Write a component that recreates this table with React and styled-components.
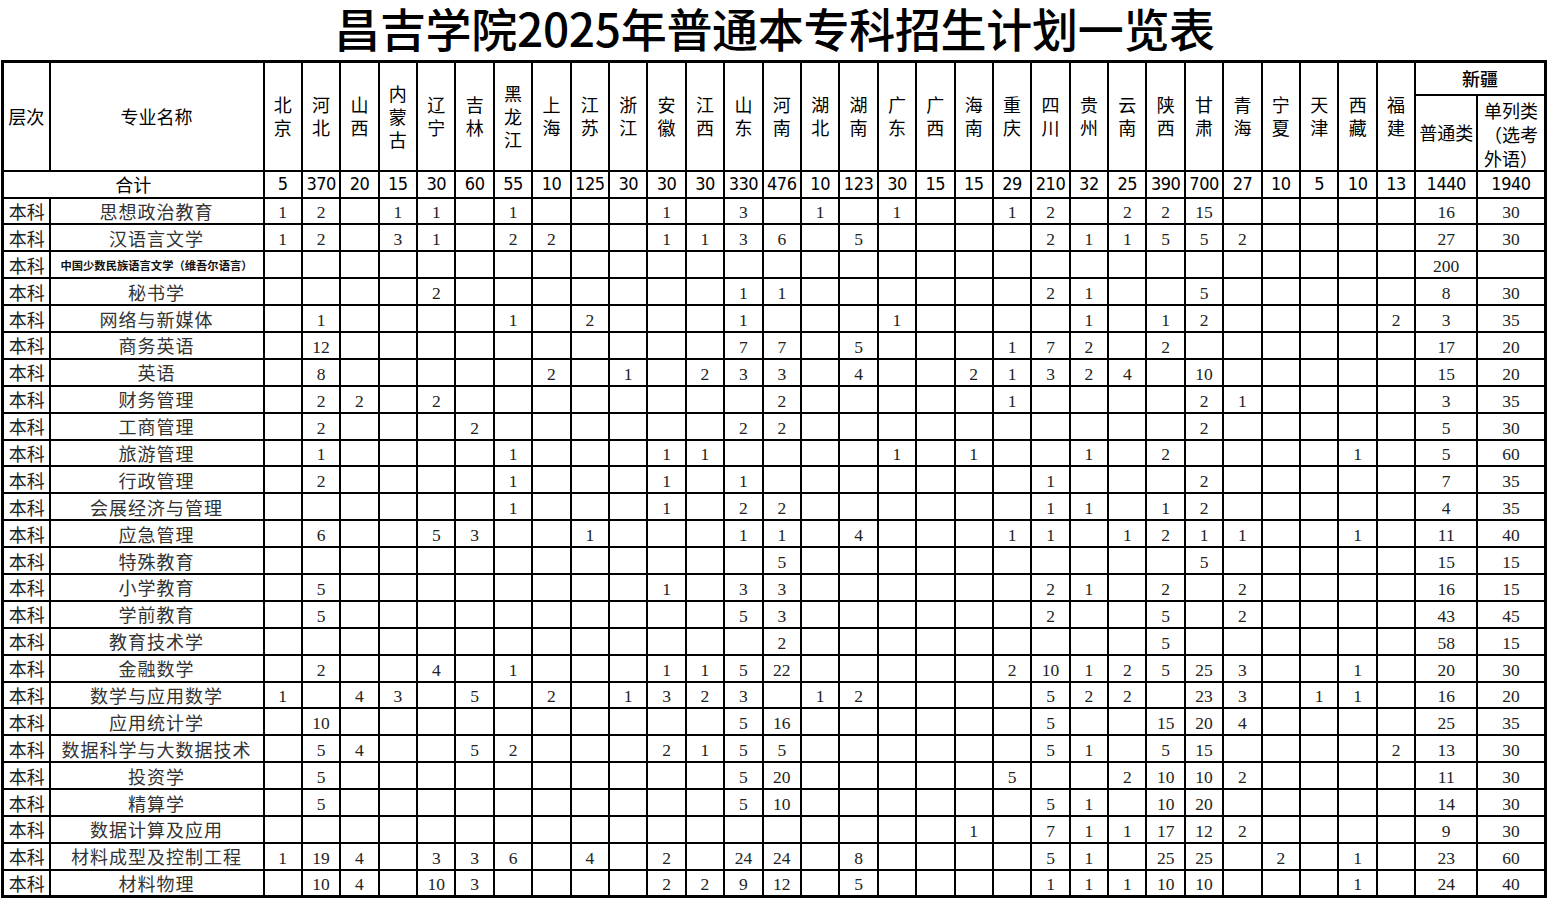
import React from 'react';
import styled, { createGlobalStyle } from 'styled-components';

const GlobalStyle = createGlobalStyle`
    html, body {
        margin: 0;
        padding: 0;
        background: #fff;
    }
    body {
        font-family: "Noto Sans CJK SC", "Noto Sans", sans-serif;
        color: #000;
    }
`;

const provinces = [
    '北京', '河北', '山西', '内蒙古', '辽宁', '吉林', '黑龙江', '上海', '江苏', '浙江',
    '安徽', '江西', '山东', '河南', '湖北', '湖南', '广东', '广西', '海南', '重庆',
    '四川', '贵州', '云南', '陕西', '甘肃', '青海', '宁夏', '天津', '西藏', '福建',
];

const totals = [
    5, 370, 20, 15, 30, 60, 55, 10, 125, 30, 30, 30, 330, 476, 10, 123, 30, 15, 15, 29,
    210, 32, 25, 390, 700, 27, 10, 5, 10, 13,
];

const r = (name, data, general, special, small) => ({ name, data, general, special, small });

const majors = [
    r('思想政治教育', { 北京: 1, 河北: 2, 内蒙古: 1, 辽宁: 1, 黑龙江: 1, 安徽: 1, 山东: 3, 湖北: 1, 广东: 1, 重庆: 1, 四川: 2, 云南: 2, 陕西: 2, 甘肃: 15 }, 16, 30),
    r('汉语言文学', { 北京: 1, 河北: 2, 内蒙古: 3, 辽宁: 1, 黑龙江: 2, 上海: 2, 安徽: 1, 江西: 1, 山东: 3, 河南: 6, 湖南: 5, 四川: 2, 贵州: 1, 云南: 1, 陕西: 5, 甘肃: 5, 青海: 2 }, 27, 30),
    r('中国少数民族语言文学（维吾尔语言）', {}, 200, '', true),
    r('秘书学', { 辽宁: 2, 山东: 1, 河南: 1, 四川: 2, 贵州: 1, 甘肃: 5 }, 8, 30),
    r('网络与新媒体', { 河北: 1, 黑龙江: 1, 江苏: 2, 山东: 1, 广东: 1, 贵州: 1, 陕西: 1, 甘肃: 2, 福建: 2 }, 3, 35),
    r('商务英语', { 河北: 12, 山东: 7, 河南: 7, 湖南: 5, 重庆: 1, 四川: 7, 贵州: 2, 陕西: 2 }, 17, 20),
    r('英语', { 河北: 8, 上海: 2, 浙江: 1, 江西: 2, 山东: 3, 河南: 3, 湖南: 4, 海南: 2, 重庆: 1, 四川: 3, 贵州: 2, 云南: 4, 甘肃: 10 }, 15, 20),
    r('财务管理', { 河北: 2, 山西: 2, 辽宁: 2, 河南: 2, 重庆: 1, 甘肃: 2, 青海: 1 }, 3, 35),
    r('工商管理', { 河北: 2, 吉林: 2, 山东: 2, 河南: 2, 甘肃: 2 }, 5, 30),
    r('旅游管理', { 河北: 1, 黑龙江: 1, 安徽: 1, 江西: 1, 广东: 1, 海南: 1, 贵州: 1, 陕西: 2, 西藏: 1 }, 5, 60),
    r('行政管理', { 河北: 2, 黑龙江: 1, 安徽: 1, 山东: 1, 四川: 1, 甘肃: 2 }, 7, 35),
    r('会展经济与管理', { 黑龙江: 1, 安徽: 1, 山东: 2, 河南: 2, 四川: 1, 贵州: 1, 陕西: 1, 甘肃: 2 }, 4, 35),
    r('应急管理', { 河北: 6, 辽宁: 5, 吉林: 3, 江苏: 1, 山东: 1, 河南: 1, 湖南: 4, 重庆: 1, 四川: 1, 云南: 1, 陕西: 2, 甘肃: 1, 青海: 1, 西藏: 1 }, 11, 40),
    r('特殊教育', { 河南: 5, 甘肃: 5 }, 15, 15),
    r('小学教育', { 河北: 5, 安徽: 1, 山东: 3, 河南: 3, 四川: 2, 贵州: 1, 陕西: 2, 青海: 2 }, 16, 15),
    r('学前教育', { 河北: 5, 山东: 5, 河南: 3, 四川: 2, 陕西: 5, 青海: 2 }, 43, 45),
    r('教育技术学', { 河南: 2, 陕西: 5 }, 58, 15),
    r('金融数学', { 河北: 2, 辽宁: 4, 黑龙江: 1, 安徽: 1, 江西: 1, 山东: 5, 河南: 22, 重庆: 2, 四川: 10, 贵州: 1, 云南: 2, 陕西: 5, 甘肃: 25, 青海: 3, 西藏: 1 }, 20, 30),
    r('数学与应用数学', { 北京: 1, 山西: 4, 内蒙古: 3, 吉林: 5, 上海: 2, 浙江: 1, 安徽: 3, 江西: 2, 山东: 3, 湖北: 1, 湖南: 2, 四川: 5, 贵州: 2, 云南: 2, 甘肃: 23, 青海: 3, 天津: 1, 西藏: 1 }, 16, 20),
    r('应用统计学', { 河北: 10, 山东: 5, 河南: 16, 四川: 5, 陕西: 15, 甘肃: 20, 青海: 4 }, 25, 35),
    r('数据科学与大数据技术', { 河北: 5, 山西: 4, 吉林: 5, 黑龙江: 2, 安徽: 2, 江西: 1, 山东: 5, 河南: 5, 四川: 5, 贵州: 1, 陕西: 5, 甘肃: 15, 福建: 2 }, 13, 30),
    r('投资学', { 河北: 5, 山东: 5, 河南: 20, 重庆: 5, 云南: 2, 陕西: 10, 甘肃: 10, 青海: 2 }, 11, 30),
    r('精算学', { 河北: 5, 山东: 5, 河南: 10, 四川: 5, 贵州: 1, 陕西: 10, 甘肃: 20 }, 14, 30),
    r('数据计算及应用', { 海南: 1, 四川: 7, 贵州: 1, 云南: 1, 陕西: 17, 甘肃: 12, 青海: 2 }, 9, 30),
    r('材料成型及控制工程', { 北京: 1, 河北: 19, 山西: 4, 辽宁: 3, 吉林: 3, 黑龙江: 6, 江苏: 4, 安徽: 2, 山东: 24, 河南: 24, 湖南: 8, 四川: 5, 贵州: 1, 陕西: 25, 甘肃: 25, 宁夏: 2, 西藏: 1 }, 23, 60),
    r('材料物理', { 河北: 10, 山西: 4, 辽宁: 10, 吉林: 3, 安徽: 2, 江西: 2, 山东: 9, 河南: 12, 湖南: 5, 四川: 1, 贵州: 1, 云南: 1, 陕西: 10, 甘肃: 10, 西藏: 1 }, 24, 40),
];

const VerticalLabel = ({ text }) => (
    <Stack>
        {text.split('').map((ch, i) => (
            <span key={i}>{ch}</span>
        ))}
    </Stack>
);

const App = () => {
    return (
        <React.Fragment>
            <GlobalStyle />
            <Page>
                <Title>
                    <TitleText>昌吉学院2025年普通本专科招生计划一览表</TitleText>
                </Title>
                <Sheet>
                    <colgroup>
                        <Col $w={47} />
                        <Col $w={214} />
                        {provinces.map((p) => (
                            <Col key={p} $w={38.4} />
                        ))}
                        <Col $w={62} />
                        <Col $w={68} />
                    </colgroup>
                    <thead>
                        <HeadRow $h={33}>
                            <HeadCell rowSpan={2}>层次</HeadCell>
                            <HeadCell rowSpan={2}>专业名称</HeadCell>
                            {provinces.map((p) => (
                                <HeadCell key={p} rowSpan={2}>
                                    <VerticalLabel text={p} />
                                </HeadCell>
                            ))}
                            <HeadCell colSpan={2} $bold>新疆</HeadCell>
                        </HeadRow>
                        <HeadRow $h={75}>
                            <HeadCell>普通类</HeadCell>
                            <HeadCell $wrap>单列类（选考外语）</HeadCell>
                        </HeadRow>
                    </thead>
                    <tbody>
                        <TotalRow>
                            <TotalLabel colSpan={2}>合计</TotalLabel>
                            {totals.map((n, i) => (
                                <TotalCell key={i}>{n}</TotalCell>
                            ))}
                            <TotalCell>1440</TotalCell>
                            <TotalCell>1940</TotalCell>
                        </TotalRow>
                        {majors.map((m) => (
                            <DataRow key={m.name}>
                                <LevelCell>本科</LevelCell>
                                <NameCell $small={m.small}>{m.name}</NameCell>
                                {provinces.map((p) => (
                                    <NumCell key={p}>{m.data[p] ?? ''}</NumCell>
                                ))}
                                <NumCell>{m.general}</NumCell>
                                <NumCell>{m.special}</NumCell>
                            </DataRow>
                        ))}
                    </tbody>
                </Sheet>
            </Page>
        </React.Fragment>
    );
};

export default App;

const Page = styled.div`
    width: 1550px;
    padding-left: 1px;
    box-sizing: border-box;
`;

const Title = styled.div`
    height: 60px;
    display: flex;
    align-items: flex-start;
    justify-content: center;
`;

const TitleText = styled.h1`
    margin: 0;
    font-size: 46px;
    font-weight: 500;
    line-height: 54px;
    letter-spacing: -0.3px;
    padding-right: 2px;
`;

const Sheet = styled.table`
    width: 1543px;
    table-layout: fixed;
    border-collapse: collapse;
    border: 3px solid #000;
`;

const Col = styled.col`
    width: ${(p) => p.$w}px;
`;

const HeadRow = styled.tr`
    height: ${(p) => p.$h}px;
`;

const HeadCell = styled.th`
    border: 2px solid #000;
    padding: ${(p) => (p.$wrap ? '2px 0 0' : '0')};
    font-size: 18px;
    font-weight: ${(p) => (p.$bold ? 500 : 400)};
    line-height: ${(p) => (p.$wrap ? '24px' : '23px')};
    text-align: center;
    vertical-align: middle;
    white-space: ${(p) => (p.$wrap ? 'normal' : 'nowrap')};
`;

const Stack = styled.div`
    display: flex;
    flex-direction: column;
    align-items: center;
`;

const TotalRow = styled.tr`
    height: 27px;
`;

const TotalLabel = styled.td`
    border: 2px solid #000;
    padding: 0;
    text-align: center;
    font-size: 18px;
    line-height: 22px;
`;

const TotalCell = styled.td`
    border: 2px solid #000;
    padding: 0;
    text-align: center;
    font-family: "Liberation Sans Narrow", "DejaVu Sans Condensed", "Liberation Sans", sans-serif;
    font-stretch: condensed;
    font-size: 18px;
    line-height: 22px;
    letter-spacing: -0.5px;
`;

const DataRow = styled.tr`
    height: 26.9px;
`;

const LevelCell = styled.td`
    border: 2px solid #000;
    padding: 0 0 0 1px;
    text-align: center;
    font-size: 18px;
    line-height: 22px;
    color: #222;
`;

const NameCell = styled.td`
    border: 2px solid #000;
    padding: 0;
    text-align: center;
    white-space: nowrap;
    font-size: ${(p) => (p.$small ? '11.3px' : '18px')};
    font-weight: ${(p) => (p.$small ? 700 : 400)};
    line-height: 22px;
    letter-spacing: ${(p) => (p.$small ? '0' : '1px')};
    color: ${(p) => (p.$small ? '#111' : '#333')};
`;

const NumCell = styled.td`
    border: 2px solid #000;
    padding: 4px 0 0;
    text-align: center;
    font-family: "Liberation Serif", "DejaVu Serif", serif;
    font-size: 17.5px;
    line-height: 19px;
    color: #222;
`;
